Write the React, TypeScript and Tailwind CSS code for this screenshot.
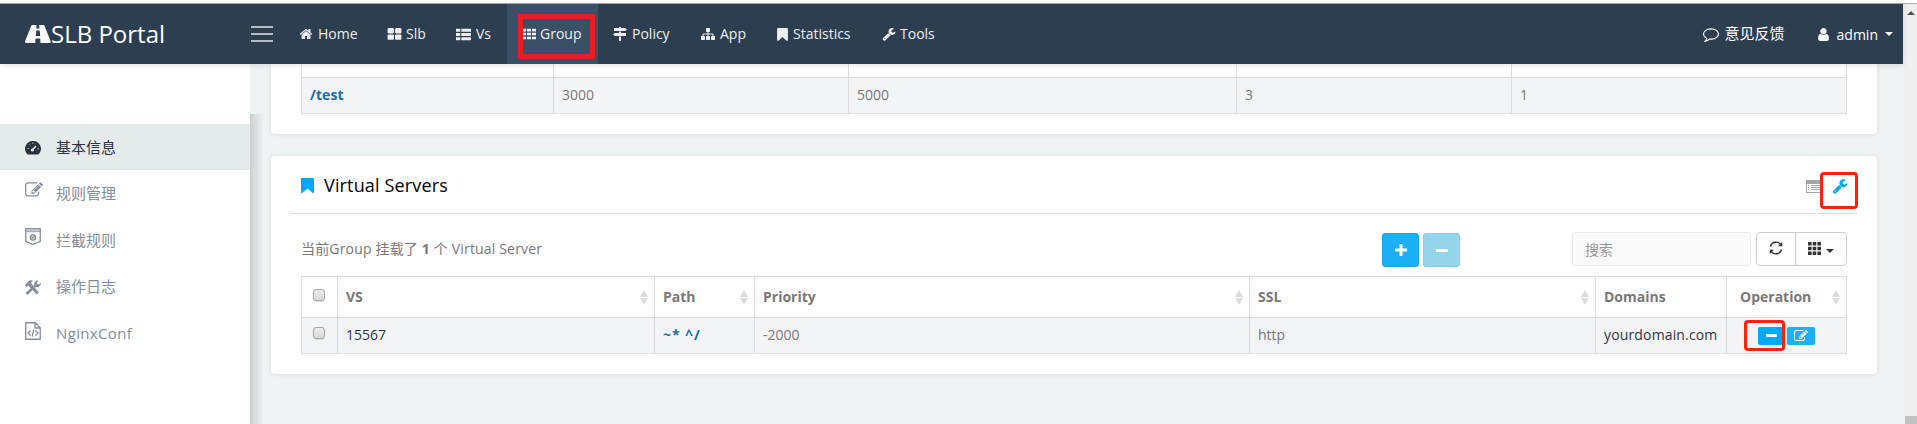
import React from "react";

const P = {
  home: "M1472 992v480q0 26-19 45t-45 19h-384v-384h-256v384h-384q-26 0-45-19t-19-45v-480q0-1 .5-3t.5-3l575-474 575 474q1 2 1 6zm223-69l-62 74q-8 9-21 11h-3q-13 0-21-7l-692-577-692 577q-12 8-24 7-13-2-21-11l-62-74q-8-10-7-23.5t11-21.5l719-599q32-26 76-26t76 26l244 204v-195q0-14 9-23t23-9h192q14 0 23 9t9 23v408l219 182q10 8 11 21.5t-7 23.5z",
  large: "M832 1024v384q0 52-38 90t-90 38h-512q-52 0-90-38t-38-90v-384q0-52 38-90t90-38h512q52 0 90 38t38 90zm0-768v384q0 52-38 90t-90 38h-512q-52 0-90-38t-38-90v-384q0-52 38-90t90-38h512q52 0 90 38t38 90zm896 768v384q0 52-38 90t-90 38h-512q-52 0-90-38t-38-90v-384q0-52 38-90t90-38h512q52 0 90 38t38 90zm0-768v384q0 52-38 90t-90 38h-512q-52 0-90-38t-38-90v-384q0-52 38-90t90-38h512q52 0 90 38t38 90z",
  list: "M0 220h512v340h-512zM640 220h1152v340h-1152zM0 728h512v340h-512zM640 728h1152v340h-1152zM0 1236h512v340h-512zM640 1236h1152v340h-1152z",
  th: "M0 220h512v340h-512zM640 220h512v340h-512zM1280 220h512v340h-512zM0 728h512v340h-512zM640 728h512v340h-512zM1280 728h512v340h-512zM0 1236h512v340h-512zM640 1236h512v340h-512zM1280 1236h512v340h-512z",
  wrench: "M448 1472q0-26-19-45t-45-19-45 19-19 45 19 45 45 19 45-19 19-45zm644-420l-682 682q-37 37-90 37-52 0-91-37l-106-108q-38-36-38-90 0-53 38-91l681-681q39 98 114.5 173.5t173.5 114.5zm634-435q0 39-23 106-47 134-164.5 217.5t-258.5 83.5q-185 0-316.5-131.5t-131.5-316.5 131.5-316.5 316.5-131.5q58 0 121.5 16.5t107.5 46.5q16 11 16 28t-16 28l-293 169v224l193 107q5-3 79-48.5t135.5-81 70.5-35.5q15 0 23.5 10t8.5 25z",
  sitemap: "M1792 1248v320q0 40-28 68t-68 28h-320q-40 0-68-28t-28-68v-320q0-40 28-68t68-28h96v-192h-512v192h96q40 0 68 28t28 68v320q0 40-28 68t-68 28h-320q-40 0-68-28t-28-68v-320q0-40 28-68t68-28h96v-192h-512v192h96q40 0 68 28t28 68v320q0 40-28 68t-68 28h-320q-40 0-68-28t-28-68v-320q0-40 28-68t68-28h96v-192q0-52 38-90t90-38h512v-192h-96q-40 0-68-28t-28-68v-320q0-40 28-68t68-28h320q40 0 68 28t28 68v320q0 40-28 68t-68 28h-96v192h512q52 0 90 38t38 90v192h96q40 0 68 28t28 68z",
  bookmark: "M1420 128q23 0 44 9 33 13 52.5 41t19.5 62v1289q0 34-19.5 62t-52.5 41q-19 8-44 8-48 0-83-32l-441-424-441 424q-36 33-83 33-23 0-44-9-33-13-52.5-41t-19.5-62v-1289q0-34 19.5-62t52.5-41q21-9 44-9h1048z",
  signs: "M1745 297q10 10 10 23t-10 23l-141 141q-28 28-68 28h-1344q-26 0-45-19t-19-45v-256q0-26 19-45t45-19h576v-64q0-26 19-45t45-19h128q26 0 45 19t19 45v64h512q40 0 68 28zm-977 919h256v512q0 26-19 45t-45 19h-128q-26 0-45-19t-19-45v-512zm832-448q26 0 45 19t19 45v256q0 26-19 45t-45 19h-1344q-40 0-68-28l-141-141q-10-10-10-23t10-23l141-141q28-28 68-28h512v-192h256v192h576z",
  road: "M1111 1004v-4l-24-320q-1-13-11-22.5t-23-9.5h-186q-13 0-23 9.5t-11 22.5l-24 320v4q-1 12 8 20t21 8h244q12 0 21-8t8-20zm749 452q0 73-46 73h-704q13 0 22-9.5t8-22.5l-20-256q-1-13-11-22.5t-23-9.5h-272q-13 0-23 9.5t-11 22.5l-20 256q-1 13 8 22.5t22 9.5h-704q-46 0-46-73 0-54 26-116l417-1044q8-19 26-33t38-14h339q-13 0-23 9.5t-11 22.5l-15 192q-1 14 8 23t22 9h166q13 0 22-9t8-23l-15-192q-1-13-11-22.5t-23-9.5h339q20 0 38 14t26 33l417 1044q26 62 26 116z",
  edit: "M888 1184l116-116-152-152-116 116v56h96v96h56zm440-720q-16-16-33 1l-350 350q-17 17-1 33t33-1l350-350q17-17 1-33zm80 594v190q0 119-84.5 203.5t-203.5 84.5h-832q-119 0-203.5-84.5t-84.5-203.5v-832q0-119 84.5-203.5t203.5-84.5h832q63 0 117 25 15 7 18 23 3 17-9 29l-49 49q-14 14-32 8-23-6-45-6h-832q-66 0-113 47t-47 113v832q0 66 47 113t113 47h832q66 0 113-47t47-113v-126q0-13 9-22l64-64q15-15 35-7t20 29zm-96-738l288 288-672 672h-288v-288zm444 132l-92 92-288-288 92-92q28-28 68-28t68 28l152 152q28 28 28 68t-28 68z",
  comment: "M896 384q-204 0-381.5 69.5t-282 187.5-104.5 255q0 112 71.5 213.5t201.5 175.5l87 50-27 96q-24 91-70 172 152-63 275-171l43-38 57 6q69 8 130 8 204 0 381.5-69.5t282-187.5 104.5-255-104.5-255-282-187.5-381.5-69.5zm896 512q0 174-120 321.5t-326 233-450 85.5q-70 0-145-8-198 175-460 242-49 14-114 22h-5q-15 0-27-10.5t-16-27.5v-1q-3-4-.5-12t2-10 4.5-9.5l6-9 7-8.5 8-9q7-8 31-34.5t34.5-38 31-39.5 32.5-51 27-59 26-76q-157-89-247.5-220t-90.5-281q0-174 120-321.5t326-233 450-85.5 450 85.5 326 233 120 321.5z",
  user: "M1536 1399q0 109-62.5 187t-150.5 78h-854q-88 0-150.5-78t-62.5-187q0-85 8.5-160.5t31.5-152 58.5-131 94-89 134.5-34.5q131 128 313 128t313-128q76 0 134.5 34.5t94 89 58.5 131 31.5 152 8.5 160.5zm-256-887q0 159-112.5 271.5t-271.5 112.5-271.5-112.5-112.5-271.5 112.5-271.5 271.5-112.5 271.5 112.5 112.5 271.5z",
};

const FULL = "0 0 1792 1792";
const BOOKMARK_BOX = "256 128 1280 1536";

function Icon({ d, className, box = FULL }: { d: string; className: string; box?: string }) {
  return (
    <svg viewBox={box} className={`shrink-0 ${className}`} fill="currentColor" fillRule="evenodd">
      <path d={d} />
    </svg>
  );
}

function Sort() {
  return (
    <svg viewBox="0 0 8 15" className="h-[15px] w-2 shrink-0" fill="#dcdcdc">
      <path d="M4 0L8 7H0zM0 8h8L4 15z" />
    </svg>
  );
}

function Caret({ className }: { className: string }) {
  return (
    <svg viewBox="0 0 8 4" className={`h-1 w-2 shrink-0 ${className}`} fill="currentColor">
      <path d="M0 0h8L4 4z" />
    </svg>
  );
}

function Check() {
  return (
    <div className="h-3 w-3 rounded-[3px] border border-[#a5a5a5] bg-linear-to-b from-[#ececec] to-[#dadada] shadow-[0_1px_1px_#dcdcdc]" />
  );
}

const nav = [
  { t: "Home", d: P.home, w: "w-[88px] gap-[5px]", i: "h-[14px] w-[14px]" },
  { t: "Slb", d: P.large, w: "w-[69px] gap-1", i: "h-[15px] w-[15px]" },
  { t: "Vs", d: P.list, w: "w-[66px] gap-[5px]", i: "h-[15px] w-[15px]" },
  { t: "Group", d: P.th, w: "w-[91px] gap-1 bg-[#3a5067]", i: "h-[14px] w-[14px]" },
  { t: "Policy", d: P.signs, w: "w-[88px] gap-[5px]", i: "h-[14px] w-[14px]" },
  { t: "App", d: P.sitemap, w: "w-[76px] gap-[5px]", i: "h-[14px] w-[14px]" },
  { t: "Statistics", d: P.bookmark, w: "w-[105px] gap-[5px]", i: "h-[13px] w-[11px]", box: BOOKMARK_BOX },
  { t: "Tools", d: P.wrench, w: "w-[84px] gap-1", i: "h-[14px] w-[14px]" },
];

const side = [
  {
    t: "基本信息",
    active: true,
    icon: (
      <svg viewBox="0 0 16 16" className="h-4 w-4">
        <path d="M8 1a7.700 7.700 0 0 0-5.600 13.200q.4.4 1 .4h9.200q.6 0 1-.4A7.700 7.700 0 0 0 8 1z" fill="#2b333e" />
        <path d="M7 10.500l4-4.500" stroke="#e5eaea" strokeWidth="1.500" />
        <circle cx="7.300" cy="10" r="1.500" fill="#e5eaea" />
        <path d="M8 2.800v1M4.200 4.600l.7.7M2.500 8.500h1M12.600 8.800h1" stroke="#e5eaea" strokeWidth="1" />
      </svg>
    ),
  },
  { t: "规则管理", icon: <Icon d={P.edit} className="mb-2 h-[18px] w-[18px]" /> },
  {
    t: "拦截规则",
    icon: (
      <svg viewBox="0 0 16 18" className="mb-[7px] h-[18px] w-4" fill="none" stroke="currentColor">
        <path d="M.75.75h14.500v12.500L8 16.500.75 13.250z" strokeWidth="1.300" />
        <path d="M1 3.200h14" strokeWidth="2" strokeOpacity=".7" />
        <circle cx="8" cy="9.500" r="2.600" strokeWidth="1.300" fill="currentColor" fillOpacity=".3" />
        <path d="M6.500 10.500l3-2" strokeWidth="1.300" />
      </svg>
    ),
  },
  {
    t: "操作日志",
    icon: (
      <svg viewBox="0 0 16 15" className="h-[15px] w-4" fill="currentColor">
        <path d="M0 5.200L3.800.8Q5.800-.2 8 1L6 2.600l1 1.600 6.800 8.300-2 2L4.300 6.800 3 5.600 1.600 6.900z" />
        <path d="M1 12.600l8.300-7.500A3.600 3.600 0 0 1 13.500.6L11.700 2.700l1 1.500 1.400.2L15.700 2.500a3.500 3.500 0 0 1-4.700 4.200L3 14.500q-2.400.2-2-1.900z" />
      </svg>
    ),
  },
  {
    t: "NginxConf",
    icon: (
      <svg viewBox="0 0 16 18" className="mb-[5px] h-[18px] w-4" fill="none" stroke="currentColor" strokeWidth="1.300">
        <path d="M.75.75h9.500l5 5v11.500H.75zM10 1v5h5M5.500 8.500L3 11l2.500 2.500M10.500 8.500L13 11l-2.500 2.500M9 7.500L7 14.500" />
      </svg>
    ),
  },
];

const line = "flex items-center border-r border-[#dcdcdc]";
const head = `${line} h-[41px] justify-between border-b pr-[6px] font-bold`;
const row = `${line} bg-[#f3f4f6] pb-[2px] pl-2`;

export default function App() {
  return (
    <div className="relative flex h-[424px] w-[1917px] flex-col overflow-hidden bg-[#eff3f4] font-['Open_Sans','Noto_Sans_CJK_SC',sans-serif] text-sm text-[#7a7878]">
      <div className="h-1 shrink-0 border-b border-[#aaa] bg-white" />
      <div className="flex min-h-0 flex-1">
        <div className="flex w-[1903px] flex-col">
          <header className="relative z-10 flex h-[60px] shrink-0 bg-[#2c3e50] text-[#eee] shadow-[0_1px_6px_rgba(0,0,0,0.12)]">
            <div className="flex w-[251px] items-center pl-[25px] text-2xl text-white">
              <Icon d={P.road} box="40 249 1840 1280" className="h-[18px] w-[26px]" />
              <span className="pb-px">SLB Portal</span>
            </div>
            <div className="flex w-[33px] flex-col gap-[5px] pt-[22px]">
              <i className="h-[2px] w-[22px] bg-[#b4bcc4]" />
              <i className="h-[2px] w-[22px] bg-[#b4bcc4]" />
              <i className="h-[2px] w-[22px] bg-[#b4bcc4]" />
            </div>
            {nav.map((n) => (
              <div key={n.t} className={`flex items-center pl-[15px] ${n.w}`}>
                <Icon d={n.d} box={n.box} className={n.i} />
                <span>{n.t}</span>
              </div>
            ))}
            <div className="ml-auto flex items-center pr-[10px] text-white">
              <Icon d={P.comment} className="h-4 w-4" />
              <span className="ml-[6px] text-[15px]">意见反馈</span>
              <Icon d={P.user} className="ml-[31px] h-[15px] w-[15px]" />
              <span className="ml-[6px] pt-px">admin</span>
              <Caret className="ml-[7px]" />
            </div>
            <div className="absolute top-[10px] left-[518px] h-[45px] w-[77px] border-[5px] border-[#ed1c24]" />
          </header>
          <div className="flex min-h-0 flex-1">
            <aside className="relative z-[1] flex w-[250px] shrink-0 flex-col gap-[0.5px] bg-white pt-[60px] text-[15px] text-[#858f9b]">
              {side.map((s) => (
                <div key={s.t} className={`flex h-[46px] items-center pt-px pl-[25px] ${s.active ? "bg-[#e5eaea] text-[#2b333e]" : ""}`}>
                  <div className="w-[31px]">{s.icon}</div>
                  <span className={s.t === "NginxConf" ? "tracking-[0.35px]" : ""}>{s.t}</span>
                </div>
              ))}
              <div className="absolute top-[50px] bottom-0 left-[250px] w-[14px] bg-linear-to-r from-black/15 to-transparent" />
            </aside>
            <main className="pl-[21px]">
              <section className="h-[70px] w-[1606px] rounded-b bg-white px-[30px] shadow-[0_0_4px_rgba(0,0,0,0.1)]">
                <div className="grid h-[50px] grid-cols-[252px_295px_388px_275px_1fr] grid-rows-[14px_35px] border-x border-b border-[#dcdcdc]">
                  {[0, 1, 2, 3, 4].map((i) => (
                    <div key={i} className={`border-b border-[#dcdcdc] ${i < 4 ? "border-r" : ""}`} />
                  ))}
                  {["/test", "3000", "5000", "3", "1"].map((v, i) => (
                    <div key={v} className={`flex items-center bg-[#f3f4f6] pb-[2px] pl-2 ${i === 0 ? "font-bold tracking-[0.1px] text-[#1c6ca8]" : ""} ${i < 4 ? "border-r border-[#dcdcdc]" : ""}`}>
                      {v}
                    </div>
                  ))}
                </div>
              </section>
              <section className="mt-[22px] h-[218px] w-[1606px] rounded bg-white px-5 shadow-[0_0_4px_rgba(0,0,0,0.1)]">
                <div className="relative flex h-[58px] items-center border-b border-[#dcdcdc] pr-[9px] pl-[10px]">
                  <svg viewBox="0 0 13 15" className="mt-[2px] h-[15px] w-[13px]" fill="#03a9f4">
                    <path d="M0 0h13v15h-1L6.500 10.500 1 15H0z" />
                  </svg>
                  <h2 className="ml-[10px] text-lg tracking-[0.15px] text-black">Virtual Servers</h2>
                  <svg viewBox="0 0 17 13" className="mt-[3px] ml-auto h-[13px] w-[17px]" shapeRendering="crispEdges" fill="#a5a5a5">
                    <path fillRule="evenodd" d="M0 0h17v13H0zM1 4v8h15V4z" />
                    <path d="M2 5h1v1H2zM2 7h1v1H2zM2 9h1v1H2zM5 5h11v1H5zM5 7h11v1H5zM5 9h11v1H5z" />
                  </svg>
                  <Icon d={P.wrench} className="mt-[2px] ml-[9px] h-4 w-4 text-[#03a9f4]" />
                  <div className="absolute top-4 right-[-1px] h-[37px] w-[38px] rounded border-[3px] border-[#ff2010]">
                    <div className="absolute inset-y-0 left-0 w-[8px] bg-white" />
                  </div>
                </div>
                <div className="mx-[10px] flex h-[62px] items-start pt-[18px]">
                  <p className="w-[1081px] pt-[7px] leading-5 tracking-[0.17px]">
                    当前Group 挂载了 <b>1</b> 个 Virtual Server
                  </p>
                  <div className="mt-px flex gap-1">
                    <div className="flex h-[34px] w-[37px] items-center justify-center rounded-[3px] border border-[#11a6ec] bg-[#1cb0f6]">
                      <svg viewBox="0 0 12 12" className="h-3 w-3" fill="#fff"><path d="M4.500 0h3v4.500H12v3H7.500V12h-3V7.500H0v-3h4.500z" /></svg>
                    </div>
                    <div className="flex h-[34px] w-[37px] items-center justify-center rounded-[3px] border border-[#84cfe6] bg-[#93d6eb]">
                      <div className="h-[3px] w-3 rounded-[1px] bg-white" />
                    </div>
                  </div>
                  <div className="ml-auto flex h-[34px] w-[179px] items-center rounded-[3px] border border-[#eaeaea] bg-[#fafafa] pt-px pl-[12px] text-[#999]">搜索</div>
                  <div className="ml-[5px] flex h-[34px] w-[91px] items-center rounded-[4px] border border-[#ccc] text-[#333]">
                    <div className="flex h-full w-[39px] items-center justify-center border-r border-[#ccc]">
                      <svg viewBox="0 0 14 14" className="mb-[2px] h-[14px] w-[14px]" fill="none" stroke="currentColor" strokeWidth="1.400">
                        <path d="M1.500 5.700A5.700 5.700 0 0 1 11.800 3.700M12.500 8.300A5.700 5.700 0 0 1 2.200 10.300" />
                        <path d="M13.200 1v4.200H9zM.8 13V8.800H5z" fill="currentColor" stroke="none" />
                      </svg>
                    </div>
                    <svg viewBox="0 0 13 13" className="mb-px ml-3 h-[13px] w-[13px]" fill="currentColor">
                      <path d="M0 0h3.600v3.600H0zM4.700 0h3.600v3.600H4.700zM9.400 0H13v3.600H9.400zM0 4.700h3.600v3.600H0zM4.700 4.700h3.600v3.600H4.700zM9.400 4.700H13v3.600H9.400zM0 9.400h3.600V13H0zM4.700 9.400h3.600V13H4.700zM9.400 9.400H13V13H9.400z" />
                    </svg>
                    <Caret className="mt-[3px] ml-[5px]" />
                  </div>
                </div>
                <div className="mx-[10px] grid h-[78px] grid-cols-[36px_317px_100px_495px_346px_131px_120px] grid-rows-[41px_35px] border-y border-l border-[#dcdcdc]">
                  <div className={`${line} border-b pb-[4px] pl-[11px]`}><Check /></div>
                  <div className={`${head} pl-2`}>VS<Sort /></div>
                  <div className={`${head} pl-2`}>Path<Sort /></div>
                  <div className={`${head} pl-2`}>Priority<Sort /></div>
                  <div className={`${head} pl-2`}>SSL<Sort /></div>
                  <div className={`${head} pl-2`}>Domains</div>
                  <div className={`${head} pl-[13px]`}>Operation<Sort /></div>
                  <div className={`${line} bg-[#f3f4f6] pb-[5px] pl-[11px]`}><Check /></div>
                  <div className={`${row} text-[#2f3540]`}>15567</div>
                  <div className={`${row} font-bold tracking-[0.9px] text-[#1c6ca8]`}>~* ^/</div>
                  <div className={row}>-2000</div>
                  <div className={row}>http</div>
                  <div className={`${row} tracking-[0.15px] text-[#2f3540]`}>yourdomain.com</div>
                  <div className="relative flex items-center gap-[2px] border-r border-[#dcdcdc] bg-[#f3f4f6] pl-[31px]">
                    <div className="flex h-[18px] w-[27px] items-center justify-center rounded-[2px] bg-[#03a9f4]">
                      <div className="h-[3px] w-[11px] rounded-[1px] bg-white" />
                    </div>
                    <div className="flex h-[18px] w-[28px] items-center justify-center rounded-[2px] bg-[#1cb0f6] text-white">
                      <Icon d={P.edit} className="h-[14px] w-[14px]" />
                    </div>
                    <div className="absolute top-[2px] left-[17px] h-[31px] w-[41px] rounded border-[3px] border-[#ff2010]" />
                  </div>
                </div>
              </section>
            </main>
          </div>
        </div>
        <div className="flex w-[14px] flex-col items-end justify-between bg-[#f0f0f0] pt-[7px]">
          <svg viewBox="0 0 8 4" className="mr-[2px] h-1 w-2" fill="#505050">
            <path d="M4 0l4 4H0z" />
          </svg>
          <div className="h-2 w-3 bg-[#c1c1c1]" />
        </div>
      </div>
    </div>
  );
}
